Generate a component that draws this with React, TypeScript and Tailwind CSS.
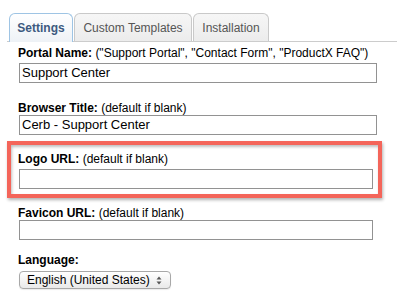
import React from 'react';

function Tab({ label, active, width }: { label: string; active?: boolean; width: string }) {
  return active ? (
    <div className={`${width} h-[29px] -mb-px flex items-center justify-center rounded-t-[6px] border border-b-0 border-[#9ec4e4] bg-gradient-to-b from-white to-[#eef2f6] text-[12px] font-bold text-[#3d5a80]`}>
      {label}
    </div>
  ) : (
    <div className={`${width} h-[28px] flex items-center justify-center rounded-t-[6px] border border-b-0 border-[#c9c9c9] bg-gradient-to-b from-[#f6f6f6] to-[#ececec] text-[12px] text-[#555]`}>
      {label}
    </div>
  );
}

function Label({ name, hint, className }: { name: string; hint?: string; className: string }) {
  return (
    <div className={`h-[13px] leading-[13px] text-[12px] text-black ${className}`}>
      <span className="font-bold">{name}</span>
      {hint && <span> {hint}</span>}
    </div>
  );
}

function TextBox({ value, width, className }: { value?: string; width: string; className: string }) {
  return (
    <div className={`${width} h-[20px] border border-[#929292] bg-white pl-[2px] flex items-center text-[13px] text-black ${className}`}>
      {value}
    </div>
  );
}

export default function App() {
  return (
    <div className="relative w-[397px] h-[303px] bg-white overflow-hidden" style={{ fontFamily: '"Liberation Sans", Arial, sans-serif' }}>
      {/* Tabs */}
      <div className="pt-[13px] ml-[7px] flex gap-px pl-[2px] border-b border-[#cccccc]">
        <Tab label="Settings" active width="w-[64px]" />
        <Tab label="Custom Templates" width="w-[118px]" />
        <Tab label="Installation" width="w-[76px]" />
      </div>

      {/* Form */}
      <div className="pl-[18px] flex flex-col">
        <Label name="Portal Name:" hint={'("Support Portal", "Contact Form", "ProductX FAQ")'} className="mt-[5px]" />
        <TextBox value="Support Center" width="w-[358px]" className="mt-[3px] ml-px" />

        <Label name="Browser Title:" hint="(default if blank)" className="mt-[19px]" />
        <TextBox value="Cerb - Support Center" width="w-[358px]" className="mt-0 ml-px" />

        <Label name="Logo URL:" hint="(default if blank)" className="mt-[18px]" />
        <TextBox width="w-[354px]" className="mt-[3px] ml-px" />

        <Label name="Favicon URL:" hint="(default if blank)" className="mt-[18px]" />
        <TextBox width="w-[354px]" className="mt-0 ml-px" />

        <Label name="Language:" className="mt-[14px]" />
        <div className="mt-[4px] ml-px w-[152px] h-[18px] rounded-[4px] border border-[#a8a8a8] bg-gradient-to-b from-white to-[#e9e9e9] shadow-[0_1px_1px_rgba(0,0,0,0.08)] flex items-center pl-[7px] pr-[8px] text-[12px] text-black">
          <span className="flex-1">English (United States)</span>
          <svg width="6" height="9" viewBox="0 0 6 9">
            <path d="M3 0.5 L5.5 3.5 L0.5 3.5 Z" fill="#555" />
            <path d="M3 8.5 L5.5 5.5 L0.5 5.5 Z" fill="#555" />
          </svg>
        </div>
      </div>

      {/* Highlight annotation */}
      <div className="absolute left-[7px] top-[141px] w-[375px] h-[57px] border-[4px] border-[#f4655a] shadow-[1px_2px_3px_rgba(0,0,0,0.3),inset_1px_2px_3px_rgba(0,0,0,0.25)]" />
    </div>
  );
}
